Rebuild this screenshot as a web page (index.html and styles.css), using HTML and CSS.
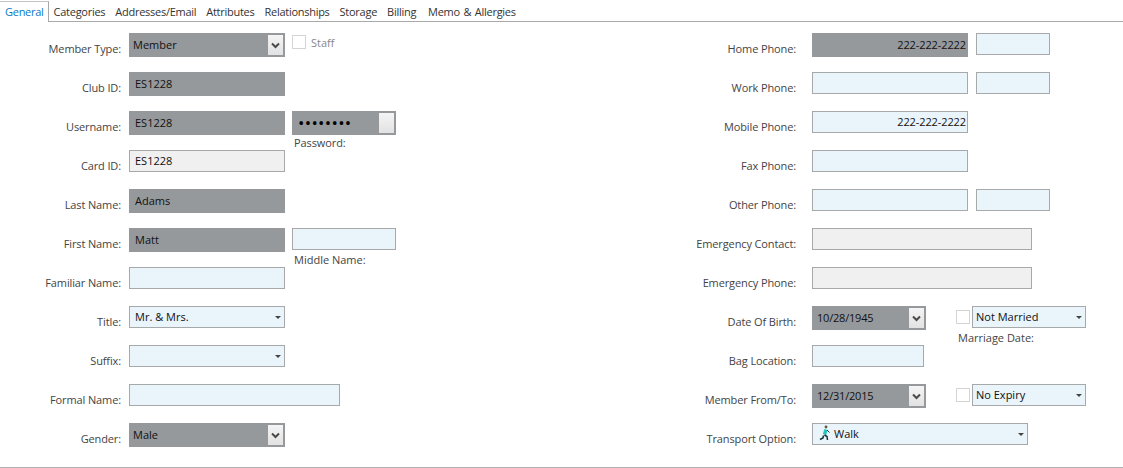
FILE: index.html
```html
<!DOCTYPE html>
<html>
  <head>
    <meta charset="UTF-8" />
    <title>Member</title>
    <link rel="stylesheet" href="styles.css">
  </head>
  <body>
    <div class="tabs">
      <span class="tab active">General</span>
      <span class="tab">Categories</span>
      <span class="tab">Addresses/Email</span>
      <span class="tab">Attributes</span>
      <span class="tab">Relationships</span>
      <span class="tab">Storage</span>
      <span class="tab billing">Billing</span>
      <span class="tab">Memo &amp; Allergies</span>
    </div>

    <div class="form">
      <div class="col col-left">
        <div class="row">
          <label>Member Type:</label>
          <div class="field req w156 combo"><span>Member</span><i class="drop"><svg width="9" height="7" viewBox="0 0 9 7"><path d="M1 1.5l3.5 3.5 3.5-3.5" fill="none" stroke="#4a4a4a" stroke-width="2"/></svg></i></div>
          <div class="check-wrap"><i class="check"></i><span class="muted">Staff</span></div>
        </div>
        <div class="row">
          <label>Club ID:</label>
          <div class="field req w156"><span>ES1228</span></div>
        </div>
        <div class="row">
          <label>Username:</label>
          <div class="field req w156"><span>ES1228</span></div>
          <div class="side">
            <div class="field req w104 combo"><span class="dots">••••••••</span><i class="drop"></i></div>
            <small>Password:</small>
          </div>
        </div>
        <div class="row">
          <label>Card ID:</label>
          <div class="field off w156"><span>ES1228</span></div>
        </div>
        <div class="row">
          <label>Last Name:</label>
          <div class="field req w156"><span>Adams</span></div>
        </div>
        <div class="row">
          <label>First Name:</label>
          <div class="field req w156"><span>Matt</span></div>
          <div class="side">
            <div class="field w104"></div>
            <small class="low">Middle Name:</small>
          </div>
        </div>
        <div class="row">
          <label>Familiar Name:</label>
          <div class="field w156"></div>
        </div>
        <div class="row">
          <label>Title:</label>
          <div class="field w156 combo"><span>Mr. &amp; Mrs.</span><i class="caret"></i></div>
        </div>
        <div class="row">
          <label>Suffix:</label>
          <div class="field w156 combo"><span></span><i class="caret"></i></div>
        </div>
        <div class="row">
          <label>Formal Name:</label>
          <div class="field w211"></div>
        </div>
        <div class="row">
          <label>Gender:</label>
          <div class="field req w156 combo"><span>Male</span><i class="drop"><svg width="9" height="7" viewBox="0 0 9 7"><path d="M1 1.5l3.5 3.5 3.5-3.5" fill="none" stroke="#4a4a4a" stroke-width="2"/></svg></i></div>
        </div>
      </div>

      <div class="col col-right">
        <div class="row">
          <label>Home Phone:</label>
          <div class="field req w156 num"><span>222-222-2222</span></div>
          <div class="field w74 next"></div>
        </div>
        <div class="row">
          <label>Work Phone:</label>
          <div class="field w156"></div>
          <div class="field w74 next"></div>
        </div>
        <div class="row">
          <label>Mobile Phone:</label>
          <div class="field w156 num"><span>222-222-2222</span></div>
        </div>
        <div class="row">
          <label>Fax Phone:</label>
          <div class="field w156"></div>
        </div>
        <div class="row">
          <label>Other Phone:</label>
          <div class="field w156"></div>
          <div class="field w74 next"></div>
        </div>
        <div class="row">
          <label>Emergency Contact:</label>
          <div class="field off w220"></div>
        </div>
        <div class="row">
          <label>Emergency Phone:</label>
          <div class="field off w220"></div>
        </div>
        <div class="row">
          <label>Date Of Birth:</label>
          <div class="field req w114 combo date"><span>10/28/1945</span><i class="drop"><svg width="9" height="7" viewBox="0 0 9 7"><path d="M1 1.5l3.5 3.5 3.5-3.5" fill="none" stroke="#4a4a4a" stroke-width="2"/></svg></i></div>
          <div class="side side-date">
            <div class="date-opt"><i class="check"></i><div class="field w114 combo tight"><span>Not Married</span><i class="caret"></i></div></div>
            <small class="low">Marriage Date:</small>
          </div>
        </div>
        <div class="row">
          <label>Bag Location:</label>
          <div class="field w112"></div>
        </div>
        <div class="row">
          <label>Member From/To:</label>
          <div class="field req w114 combo date"><span>12/31/2015</span><i class="drop"><svg width="9" height="7" viewBox="0 0 9 7"><path d="M1 1.5l3.5 3.5 3.5-3.5" fill="none" stroke="#4a4a4a" stroke-width="2"/></svg></i></div>
          <div class="side side-date">
            <div class="date-opt"><i class="check"></i><div class="field w114 combo tight"><span>No Expiry</span><i class="caret"></i></div></div>
          </div>
        </div>
        <div class="row">
          <label>Transport Option:</label>
          <div class="field w216 combo">
            <span class="walk">
              <svg width="13" height="16" viewBox="0 0 13 16"><circle cx="8" cy="2" r="1.4" fill="#6a5238"/><path d="M8 4.500L6.500 9.500" stroke="#1fc4bc" stroke-width="3.400"/><path d="M9 5l2.500 2.500" stroke="#333" stroke-width="1" fill="none"/><path d="M6.500 10l2.500 1.500.5 3.500M5.500 10.500l-.5 2.500-3 1.500" stroke="#0f3534" stroke-width="1.500" fill="none"/></svg>
              Walk
            </span>
            <i class="caret"></i>
          </div>
        </div>
      </div>
    </div>
    <div class="bottom-line"></div>
  </body>
</html>
```

FILE: styles.css
```css
html,
body {
  height: 100%;
}

body {
  font-family: "Open Sans", "Noto Sans", Arial, sans-serif;
  font-size: 11px;
  color: #111;
  background-color: #fff;
  margin: 0;
  padding: 0;
  overflow: hidden;
}

/* tabs */
.tabs {
  display: flex;
  height: 21px;
  border-bottom: 1px solid #a9a9a9;
}

.tab {
  padding: 4px 5px 0 5px;
  color: #333;
  white-space: nowrap;
  letter-spacing: -0.27px;
  word-spacing: 1px;
}

.tab.billing {
  padding-right: 7px;
}

.tab.active {
  box-sizing: border-box;
  color: #0a78c8;
  background-color: #fff;
  height: 21px;
  margin-top: 1px;
  padding: 2px 4px 0 5px;
  border-top: 1px solid #c4c4c4;
  border-right: 1px solid #a9a9a9;
}

/* form */
.form {
  display: flex;
  padding-top: 11px;
}

.col-left {
  width: 680px;
}

.row {
  display: flex;
  align-items: flex-start;
  height: 39px;
}

.row label {
  color: #444;
  text-align: right;
  white-space: nowrap;
  padding-top: 8px;
  line-height: 16px;
  letter-spacing: -0.12px;
}

.col-left label {
  width: 121px;
  margin-right: 8px;
}

.col-right label {
  width: 116px;
  margin-right: 16px;
}

.field {
  box-sizing: border-box;
  height: 22px;
  flex: none;
  display: flex;
  align-items: center;
  justify-content: space-between;
  padding: 0 5px;
  background-color: #e9f4fb;
  border: 1px solid #a6a8aa;
}

.field span {
  position: relative;
  top: -1px;
}

.req {
  height: 24px;
  background-color: #96999c;
  border-color: #96999c;
}

.off {
  background-color: #f0f0f0;
}

.num {
  justify-content: flex-end;
  padding-right: 1px;
  letter-spacing: -0.1px;
}

.next {
  margin-left: 8px;
}

.w74 { width: 74px; }
.w104 { width: 104px; }
.w112 { width: 112px; }
.w114 { width: 114px; }
.w156 { width: 156px; }
.w211 { width: 211px; }
.w216 { width: 216px; }
.w220 { width: 220px; }

.drop {
  flex: none;
  display: flex;
  align-items: center;
  justify-content: center;
  width: 15px;
  height: 20px;
  margin-right: -4px;
  background: linear-gradient(#f4f4f4, #e2e2e2);
}

.req.combo {
  padding-right: 5px;
  padding-left: 3px;
}

.date {
  letter-spacing: -0.2px;
}

.req.date {
  padding-left: 4px;
}

.tight {
  padding-left: 3px;
}

.caret {
  flex: none;
  width: 0;
  height: 0;
  margin-right: -2px;
  border-left: 3px solid transparent;
  border-right: 3px solid transparent;
  border-top: 3px solid #444;
}

.check {
  display: block;
  flex: none;
  box-sizing: border-box;
  width: 14px;
  height: 14px;
  background-color: #fff;
  border: 1px solid #d4d4d4;
}

.check-wrap {
  display: flex;
  align-items: center;
  gap: 5px;
  margin-left: 7px;
  margin-top: -1px;
  height: 20px;
}

.muted {
  color: #888;
}

.side {
  margin-left: 7px;
}

.side small {
  display: block;
  font-size: 11px;
  color: #444;
  padding-left: 2px;
  line-height: 15px;
  letter-spacing: -0.1px;
}

.side small.low {
  padding-top: 2px;
  letter-spacing: 0;
}

.dots {
  font-size: 17px;
  letter-spacing: 0.3px;
  color: #000;
  margin-left: 2px;
}

.side-date {
  margin-left: 30px;
}

.date-opt {
  display: flex;
  align-items: center;
  gap: 2px;
}

.walk {
  display: flex;
  align-items: center;
  gap: 3px;
}

.bottom-line {
  position: fixed;
  left: 0;
  right: 0;
  bottom: 0;
  height: 1px;
  background-color: #b0b0b0;
}
```
